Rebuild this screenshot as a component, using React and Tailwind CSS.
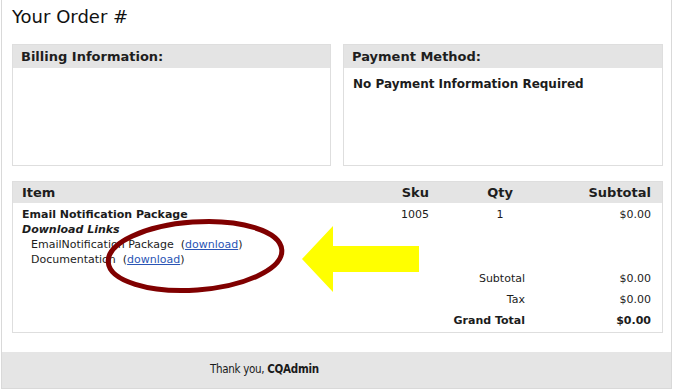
import React from 'react';

const items = [
  { name: 'Email Notification Package', sku: '1005', qty: 1, subtotal: '$0.00' },
];

const downloads = ['EmailNotification Package', 'Documentation'];

const totals = [
  { label: 'Subtotal', value: '$0.00' },
  { label: 'Tax', value: '$0.00' },
  { label: 'Grand Total', value: '$0.00', bold: true },
];

function Box({ title, className, children }) {
  return (
    <div className={`flex flex-col border border-[#dedede] ${className}`}>
      <div className="h-[23px] bg-[#e4e4e4] px-[8px] text-[13px] leading-[23px] font-bold text-[#1e1e1e]">
        {title}
      </div>
      <div className="flex-1 px-[9px] pt-[9px]">{children}</div>
    </div>
  );
}

export default function App() {
  return (
    <div className="relative h-[389px] w-[673px] overflow-hidden bg-white font-['DejaVu_Sans',Verdana,sans-serif] text-[#1c1c1c]">
      <div className="ml-[1px] flex h-full w-[671px] flex-col border-x border-[#d9d9d9]">
        <div className="pl-[10px] pr-[8px]">
          <h1 className="pt-[6px] text-[18px] leading-[21px] text-[#111]">Your Order #</h1>

          <div className="mt-[17px] flex h-[122px] gap-[12px]">
            <Box title="Billing Information:" className="w-[319px]" />
            <Box title="Payment Method:" className="w-[320px]">
              <p className="text-[12px] font-bold leading-[14px]">No Payment Information Required</p>
            </Box>
          </div>

          <div className="mt-[15px] border border-[#dedede]">
            <div className="flex h-[21px] items-center bg-[#e4e4e4] text-[13px] font-bold text-[#1e1e1e]">
              <div className="w-[376px] pl-[9px]">Item</div>
              <div className="w-[50px] pr-[10px] text-right">Sku</div>
              <div className="w-[122px] text-center">Qty</div>
              <div className="w-[101px] pr-[11px] text-right">Subtotal</div>
            </div>

            {items.map((item) => (
              <div key={item.sku} className="flex pt-[4px] text-[11px] leading-[15px]">
                <div className="w-[376px] pl-[9px]">
                  <div className="font-bold">{item.name}</div>
                  <div className="font-bold italic">Download Links</div>
                  {downloads.map((d) => (
                    <div key={d} className="pl-[9px]">
                      {d}&nbsp; (<a href="#" className="text-[#2a55b5] underline">download</a>)
                    </div>
                  ))}
                </div>
                <div className="w-[50px] pr-[10px] text-right">{item.sku}</div>
                <div className="w-[122px] text-center">{item.qty}</div>
                <div className="w-[101px] pr-[11px] text-right">{item.subtotal}</div>
              </div>
            ))}

            <div className="mt-[2px]">
              {totals.map((t) => (
                <div
                  key={t.label}
                  className={`flex h-[21px] items-center text-[11px] ${t.bold ? 'font-bold' : ''}`}
                >
                  <div className="w-[548px] pr-[36px] text-right">{t.label}</div>
                  <div className="w-[101px] pr-[11px] text-right">{t.value}</div>
                </div>
              ))}
            </div>
          </div>
        </div>

        <div className="mt-auto flex h-[37px] items-center border-b border-[#d9d9d9] bg-[#e5e5e5] pl-[208px] font-['DejaVu_Sans_Condensed','Liberation_Sans',sans-serif] text-[11.5px] tracking-[-0.3px] text-[#1a1a1a]">
          Thank you,&nbsp;<span className="font-bold">CQAdmin</span>
        </div>
      </div>

      <svg className="pointer-events-none absolute left-0 top-0" width="673" height="389" viewBox="0 0 673 389">
        <ellipse
          cx="195"
          cy="256"
          rx="87"
          ry="34"
          fill="none"
          stroke="#800000"
          strokeWidth="5"
          transform="rotate(-4 195 256)"
        />
        <polygon
          points="302,259 333,226 333,246 419,246 419,272 333,272 333,292"
          fill="#ffff00"
        />
      </svg>
    </div>
  );
}
